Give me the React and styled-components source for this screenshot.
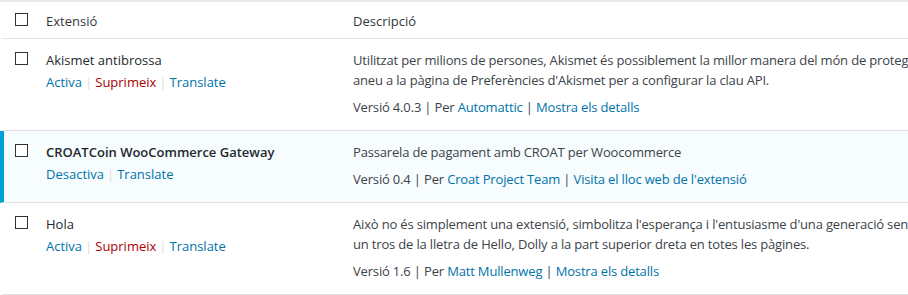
import React from "react";
import styled, { createGlobalStyle } from "styled-components";

const Global = createGlobalStyle`
  html, body { margin: 0; padding: 0; background: #fff; overflow: hidden; }
  body { width: 908px; height: 295px; font-family: "Open Sans", "Noto Sans", sans-serif; font-size: 13px; color: #3c434a; }
`;

const Table = styled.div`
  width: 1400px;
  border-top: 2px solid #e8e8e8;
`;

const Row = styled.div`
  display: flex;
  align-items: flex-start;
  border-left: 4px solid ${(p) => (p.$active ? "#00a0d2" : "transparent")};
  background: ${(p) => (p.$active ? "#f7fcfe" : "#fff")};
  border-bottom: 1px solid #e1e1e1;
`;

const CheckCell = styled.div`
  width: 42px;
  flex: none;
  padding: ${(p) => (p.$head ? "11px" : "13px")} 0 0 11px;
  box-sizing: border-box;
`;

const Box = styled.span`
  display: block;
  width: 13px;
  height: 13px;
  box-sizing: border-box;
  border: 1px solid #333;
  background: #fff;
`;

const TitleCell = styled.div`
  width: 307px;
  flex: none;
  padding: ${(p) => (p.$head ? "9px 0 7px" : "11px 0 13px")};
  line-height: 20px;
`;

const DescCell = styled.div`
  flex: 1;
  padding: ${(p) => (p.$head ? "9px 0 7px" : "11px 0 13px")};
  line-height: 20px;
  white-space: nowrap;
  letter-spacing: -0.17px;
`;

const HeadText = styled.span`
  color: #32373c;
  font-size: 13px;
  letter-spacing: 0;
`;

const Name = styled.div`
  color: #23282d;
  font-weight: ${(p) => (p.$active ? 600 : 400)};
`;

const Actions = styled.div`
  margin-top: 2px;
`;

const Link = styled.a`
  color: ${(p) => (p.$danger ? "#a00" : "#0073aa")};
  text-decoration: none;
`;

const LightSep = styled.span`
  color: #ddd;
  padding: 0 3px;
`;

const Line = styled.div``;

const Version = styled.div`
  margin-top: 7px;
`;

const plugins = [
  {
    name: "Akismet antibrossa",
    active: false,
    actions: [["Activa"], ["Suprimeix", true], ["Translate"]],
    desc: [
      "Utilitzat per milions de persones, Akismet és possiblement la millor manera del món de protegir el vostre blog de la brossa. Per a començar: activeu l'extensió Akismet i",
      "aneu a la pàgina de Preferències d'Akismet per a configurar la clau API.",
    ],
    version: "4.0.3",
    author: "Automattic",
    extra: "Mostra els detalls",
  },
  {
    name: "CROATCoin WooCommerce Gateway",
    active: true,
    actions: [["Desactiva"], ["Translate"]],
    desc: ["Passarela de pagament amb CROAT per Woocommerce"],
    version: "0.4",
    author: "Croat Project Team",
    extra: "Visita el lloc web de l'extensió",
  },
  {
    name: "Hola",
    active: false,
    actions: [["Activa"], ["Suprimeix", true], ["Translate"]],
    desc: [
      "Això no és simplement una extensió, simbolitza l'esperança i l'entusiasme d'una generació sencera resumida en dues paraules cantades per Louis Armstrong: Hello, Dolly.",
      "un tros de la lletra de Hello, Dolly a la part superior dreta en totes les pàgines.",
    ],
    version: "1.6",
    author: "Matt Mullenweg",
    extra: "Mostra els detalls",
  },
  {
    name: "Jetpack",
    active: true,
    actions: [["Desactiva"], ["Translate"]],
    desc: ["Seguretat, còpies de seguretat, rendiment i creixement per a WordPress."],
    version: "6.0",
    author: "Automattic",
    extra: "Mostra els detalls",
  },
];

export default function App() {
  return (
    <>
      <Global />
      <Table>
        <Row>
          <CheckCell $head>
            <Box />
          </CheckCell>
          <TitleCell $head>
            <HeadText>Extensió</HeadText>
          </TitleCell>
          <DescCell $head>
            <HeadText>Descripció</HeadText>
          </DescCell>
        </Row>
        {plugins.map((p) => (
          <Row key={p.name} $active={p.active}>
            <CheckCell>
              <Box />
            </CheckCell>
            <TitleCell>
              <Name $active={p.active}>{p.name}</Name>
              <Actions>
                {p.actions.map(([label, danger], i) => (
                  <React.Fragment key={label}>
                    {i > 0 && <LightSep>|</LightSep>}
                    <Link href="#" $danger={danger}>
                      {label}
                    </Link>
                  </React.Fragment>
                ))}
              </Actions>
            </TitleCell>
            <DescCell>
              {p.desc.map((l) => (
                <Line key={l}>{l}</Line>
              ))}
              <Version>
                Versió {p.version} | Per <Link href="#">{p.author}</Link> |{" "}
                <Link href="#">{p.extra}</Link>
              </Version>
            </DescCell>
          </Row>
        ))}
      </Table>
    </>
  );
}
